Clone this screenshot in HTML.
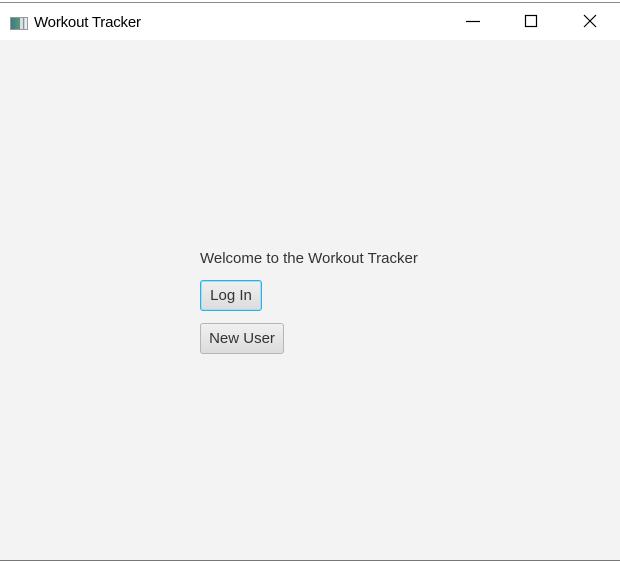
<!DOCTYPE html>
<html><head><style>
body{margin:0;width:620px;height:561px;position:relative;overflow:hidden;background:#fff;font-family:"Liberation Sans",sans-serif;}
.top{position:absolute;left:0;top:0;width:620px;height:2px;background:#fff;border-bottom:1px solid #8a8a8a;}
.title{position:absolute;left:0;top:3px;width:620px;height:37px;background:#fff;}
.t{position:absolute;left:34px;top:11px;font-size:15px;color:#000;letter-spacing:-0.2px;}
.icon{position:absolute;left:10px;top:14px;width:16px;height:11px;border:1px solid #999;background:linear-gradient(90deg,#3a7a8a 0,#5a9a70 9px,#ddd 9px,#ddd 12px,#4a7aa0 12px,#eee 14px);}
.body{position:absolute;left:0;top:40px;width:620px;height:520px;background:#f3f3f3;}
.bot{position:absolute;left:0;top:560px;width:620px;height:1px;background:#777;}
.lbl{position:absolute;left:200px;top:250px;font-size:15px;color:#333;}
.btn{position:absolute;left:200px;border:1px solid #b5b5b5;border-radius:3px;background:linear-gradient(#f0f0f0,#dcdcdc);font-size:15px;color:#333;box-sizing:border-box;text-align:center;}
</style></head><body>
<div class="top"></div>
<div class="title"><div class="icon"></div><div class="t">Workout Tracker</div>
<svg style="position:absolute;left:460px;top:8px" width="150" height="22" fill="none" stroke="#000" stroke-width="1.2">
<line x1="6" y1="10.5" x2="20" y2="10.5"/>
<rect x="65.5" y="4.5" width="11" height="11"/>
<path d="M124 4 L136 16 M136 4 L124 16"/>
</svg></div>
<div class="body"></div>
<div class="bot"></div>
<div class="lbl">Welcome to the Workout Tracker</div>
<div class="btn" style="top:280px;width:62px;height:31px;border:1px solid #2ab0e8;box-shadow:inset 0 0 0 1px #a8dcf2;line-height:30px;">Log In</div>
<div class="btn" style="top:323px;width:84px;height:31px;line-height:30px;">New User</div>
</body></html>
